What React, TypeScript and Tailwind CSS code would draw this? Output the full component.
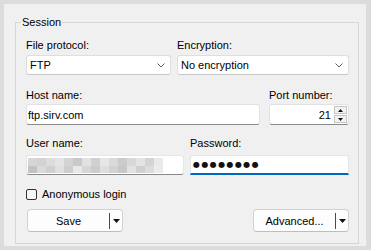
import React from "react";

const mosaicTop = [
  "bg-[#d6d6d6]", "bg-[#d2d2d2]", "bg-[#dcdcdc]", "bg-[#e4e4e4]", "bg-[#d4d4d4]", "bg-[#c9c9c9]",
  "bg-[#e2e2e2]", "bg-[#d0d0d0]", "bg-[#e6e6e6]", "bg-[#dadada]", "bg-[#cbcbcb]", "bg-[#d8d8d8]",
  "bg-[#e4e4e4]", "bg-[#d4d4d4]", "bg-[#e9e9e9]",
];
const mosaicBottom = [
  "bg-[#c2c2c2]", "bg-[#dadada]", "bg-[#d0d0d0]", "bg-[#e0e0e0]", "bg-[#cecece]", "bg-[#e8e8e8]",
  "bg-[#d6d6d6]", "bg-[#cccccc]", "bg-[#dedede]", "bg-[#d2d2d2]", "bg-[#c8c8c8]", "bg-[#e2e2e2]",
  "bg-[#d0d0d0]", "bg-[#dcdcdc]", "bg-[#ececec]",
];

function Chevron() {
  return (
    <svg width="8" height="5" viewBox="0 0 8 5">
      <path d="M0.5 0.5 L4 4 L7.5 0.5" stroke="#606060" fill="none" strokeWidth="1" />
    </svg>
  );
}

function Combo({ value, w }: { value: string; w: string }) {
  return (
    <div
      className={`flex h-[20px] items-center justify-between rounded-[3px] border border-[#dedede] border-b-[#c8c8c8] bg-white pl-[3px] pr-[5px] ${w}`}
    >
      <span className="leading-[14px]">{value}</span>
      <Chevron />
    </div>
  );
}

function DownTri() {
  return (
    <svg width="7" height="4" viewBox="0 0 7 4">
      <path d="M0 0 L7 0 L3.5 4 Z" fill="#111" />
    </svg>
  );
}

function SplitButton({ label, className }: { label: string; className: string }) {
  return (
    <div
      className={`flex h-[23px] w-[96px] items-center rounded-[4px] border border-[#d2d2d2] border-b-[#bdbdbd] bg-[#fdfdfd] ${className}`}
    >
      <span className="flex-1 text-center leading-[14px]">{label}</span>
      <span className="h-[16px] w-[1px] bg-[#4a4a4a]" />
      <span className="flex w-[12px] justify-center">
        <DownTri />
      </span>
    </div>
  );
}

export default function App() {
  return (
    <div className="h-[250px] w-[371px] bg-[#dcdcdc] pl-[4px] pt-[4px] font-['Liberation_Sans',Arial,sans-serif] text-[11px] text-black">
      <div className="flex h-[242px] w-[362px] flex-col bg-[#f0f0f0]">
        <div className="ml-[11px] mt-[18px] flex h-[222px] w-[344px] flex-col border border-[#d6d6d6] pl-[10px] pr-[9px]">
          <span className="-ml-[5px] -mt-[9px] w-fit bg-[#f0f0f0] px-[1px] leading-[16px]">Session</span>

          {/* Row 1 */}
          <div className="mt-[8px] flex gap-[6px]">
            <div className="flex w-[145px] flex-col">
              <span className="h-[14px] leading-[14px]">File protocol:</span>
              <div className="mt-[3px]">
                <Combo value="FTP" w="w-[145px]" />
              </div>
            </div>
            <div className="flex w-[172px] flex-col">
              <span className="h-[14px] leading-[14px]">Encryption:</span>
              <div className="mt-[3px]">
                <Combo value="No encryption" w="w-[172px]" />
              </div>
            </div>
          </div>

          {/* Row 2 */}
          <div className="mt-[13px] flex gap-[9px]">
            <div className="flex w-[234px] flex-col">
              <span className="h-[14px] leading-[14px]">Host name:</span>
              <div className="mt-[2px] flex h-[21px] items-center rounded-[3px] border border-[#e2e2e2] border-b-[#8a8a8a] bg-white pl-[1px]">
                <span className="leading-[14px]">ftp.sirv.com</span>
              </div>
            </div>
            <div className="flex w-[80px] flex-col">
              <span className="h-[14px] leading-[14px]">Port number:</span>
              <div className="mt-[2px] flex h-[21px] items-center justify-end gap-[3px] rounded-[3px] border border-[#e2e2e2] border-b-[#8a8a8a] bg-white pr-[1px]">
                <span className="leading-[14px]">21</span>
                <div className="flex flex-col gap-[1px]">
                  <div className="flex h-[8px] w-[13px] items-center justify-center border border-[#c4c4c4] bg-[#f2f2f2]">
                    <svg width="5" height="3" viewBox="0 0 5 3">
                      <path d="M0 3 L5 3 L2.5 0 Z" fill="#111" />
                    </svg>
                  </div>
                  <div className="flex h-[8px] w-[13px] items-center justify-center border border-[#c4c4c4] bg-[#f2f2f2]">
                    <svg width="5" height="3" viewBox="0 0 5 3">
                      <path d="M0 0 L5 0 L2.5 3 Z" fill="#111" />
                    </svg>
                  </div>
                </div>
              </div>
            </div>
          </div>

          {/* Row 3 */}
          <div className="mt-[11px] flex gap-[6px]">
            <div className="flex w-[158px] flex-col">
              <span className="h-[14px] leading-[14px]">User name:</span>
              <div className="mt-[5px] flex h-[20px] items-center rounded-[3px] border border-[#e6e6e6] border-b-[#8a8a8a] bg-white pl-[1px]">
                <div className="flex flex-col">
                  <div className="flex">
                    {mosaicTop.map((c, i) => (
                      <span key={i} className={`h-[8px] w-[9px] ${c}`} />
                    ))}
                  </div>
                  <div className="flex">
                    {mosaicBottom.map((c, i) => (
                      <span key={i} className={`h-[7px] w-[9px] ${c}`} />
                    ))}
                  </div>
                </div>
              </div>
            </div>
            <div className="flex w-[159px] flex-col">
              <span className="h-[14px] leading-[14px]">Password:</span>
              <div className="mt-[5px] flex h-[20px] items-center rounded-t-[3px] border border-[#e6e6e6] border-b-2 border-b-[#0067c0] bg-white pl-[2px]">
                <span className="font-['DejaVu_Sans',sans-serif] text-[8px] leading-[12px] tracking-[1.4px] text-[#111]">●●●●●●●●</span>
              </div>
            </div>
          </div>

          {/* Checkbox */}
          <div className="mt-[12px] flex h-[14px] items-center gap-[5px]">
            <span className="h-[11px] w-[11px] rounded-[2px] border border-[#333333] bg-[#f6f6f6]" />
            <span className="leading-[14px]">Anonymous login</span>
          </div>

          {/* Buttons */}
          <div className="mt-[8px] flex justify-between">
            <SplitButton label="Save" className="ml-[1px]" />
            <SplitButton label="Advanced..." className="" />
          </div>
        </div>
      </div>
    </div>
  );
}
